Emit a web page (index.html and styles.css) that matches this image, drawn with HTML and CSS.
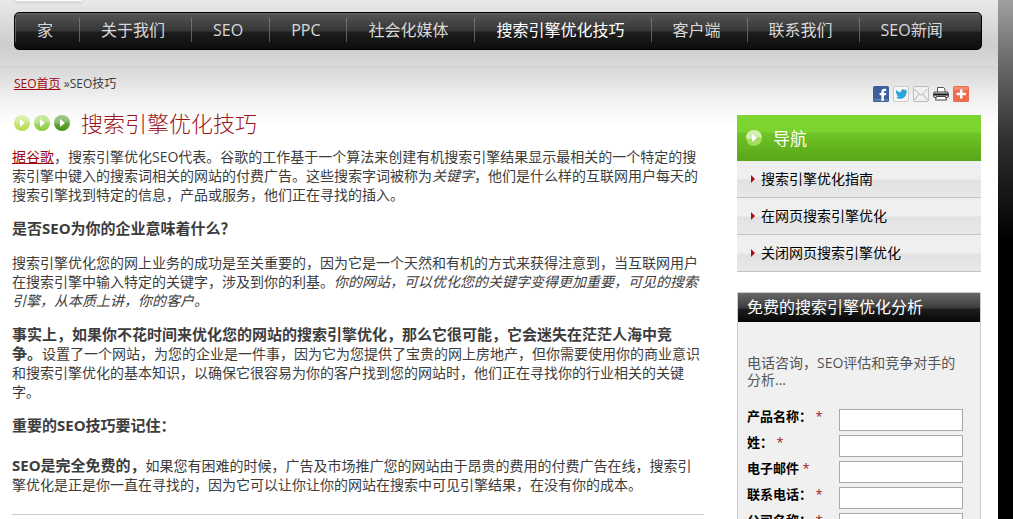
FILE: index.html
```html
<!DOCTYPE html>
<html lang="zh-CN">
<head>
  <meta charset="UTF-8" />
  <title>搜索引擎优化技巧</title>
  <link rel="stylesheet" href="styles.css">
</head>
<body>

  <div class="page">
    <header>
      <div class="logo-tab"></div>
      <nav class="menu">
        <a href="#">家</a>
        <a href="#">关于我们</a>
        <a href="#">SEO</a>
        <a href="#">PPC</a>
        <a href="#">社会化媒体</a>
        <a href="#" class="active">搜索引擎优化技巧</a>
        <a href="#">客户端</a>
        <a href="#">联系我们</a>
        <a href="#">SEO新闻</a>
      </nav>
    </header>

    <div class="columns">
      <main>
        <div class="breadcrumb"><a href="#">SEO首页</a> »SEO技巧</div>

        <div class="title">
          <svg width="58" height="16" viewBox="0 0 58 16">
            <defs>
              <linearGradient id="g1" x2="0" y2="1"><stop offset="0" stop-color="#d6ee9c"/><stop offset="1" stop-color="#b2dc4a"/></linearGradient>
              <linearGradient id="g2" x2="0" y2="1"><stop offset="0" stop-color="#bde58c"/><stop offset="1" stop-color="#84cc38"/></linearGradient>
              <linearGradient id="g3" x2="0" y2="1"><stop offset="0" stop-color="#7fb860"/><stop offset="1" stop-color="#479414"/></linearGradient>
            </defs>
            <circle cx="8" cy="8" r="8" fill="url(#g1)"/>
            <circle cx="28" cy="8" r="8" fill="url(#g2)"/>
            <circle cx="48" cy="8" r="8" fill="url(#g3)"/>
            <g fill="#fff">
              <path opacity=".25" d="M0 8a8 8 0 0 1 16 0Q12 6 8 8T0 8zM20 8a8 8 0 0 1 16 0Q32 6 28 8T20 8zM40 8a8 8 0 0 1 16 0Q52 6 48 8T40 8z"/>
              <path d="M6 4l5 4-5 4zM26 4l5 4-5 4zM46 4l5 4-5 4z"/>
            </g>
          </svg>
          <h1>搜索引擎优化技巧</h1>
        </div>

        <p><a href="#">据谷歌</a>，搜索引擎优化SEO代表。谷歌的工作基于一个算法来创建有机搜索引擎结果显示最相关的一个特定的搜索引擎中键入的搜索词相关的网站的付费广告。这些搜索字词被称为<em>关键字</em>，他们是什么样的互联网用户每天的搜索引擎找到特定的信息，产品或服务，他们正在寻找的插入。</p>

        <p><strong>是否SEO为你的企业意味着什么？</strong></p>

        <p>搜索引擎优化您的网上业务的成功是至关重要的，因为它是一个天然和有机的方式来获得注意到，当互联网用户在搜索引擎中输入特定的关键字，涉及到你的利基。<em>你的网站，可以优化您的关键字变得更加重要，可见的搜索引擎，从本质上讲，你的客户。</em></p>

        <p><strong>事实上，如果你不花时间来优化您的网站的搜索引擎优化，那么它很可能，它会迷失在茫茫人海中竞争。</strong>设置了一个网站，为您的企业是一件事，因为它为您提供了宝贵的网上房地产，但你需要使用你的商业意识和搜索引擎优化的基本知识，以确保它很容易为你的客户找到您的网站时，他们正在寻找你的行业相关的关键字。</p>

        <p><strong>重要的SEO技巧要记住：</strong></p>

        <div class="tip">
          <p><strong>SEO是完全免费的，</strong>如果您有困难的时候，广告及市场推广您的网站由于昂贵的费用的付费广告在线，搜索引擎优化是正是你一直在寻找的，因为它可以让你让你的网站在搜索中可见引擎结果，在没有你的成本。</p>
        </div>
      </main>

      <aside>
        <div class="share">
          <a href="#" aria-label="Facebook">
            <svg width="16" height="16" viewBox="0 0 16 16">
              <rect width="16" height="16" rx="1.5" fill="#3f5f9a"/>
              <path fill="#6a86b8" d="M1 13h14v1.5H1z"/>
              <path fill="#fff" d="M8.4 15V9.3H6.6V7.1h1.8V5.6C8.4 3.7 9.5 2.7 11.2 2.7h2v2.2h-1.3c-.8 0-1 .4-1 1v1.2h2.3l-.3 2.2h-2V15z"/>
            </svg>
          </a>
          <a href="#" aria-label="Twitter">
            <svg width="16" height="16" viewBox="0 0 16 16">
              <rect x=".5" y=".5" width="15" height="15" rx="1.5" fill="#f8f8f8" stroke="#c9c9c9"/>
              <path fill="#2ba3d8" d="M13.8 4.4l-1.2.4c.4-.3.7-.7.9-1.2l-1.4.5a2.4 2.4 0 0 0-4.1 2.1C6 6.1 4.3 5.2 3.1 3.7c-.6 1.100-.3 2.500.8 3.200l-1-.3c0 1.200.8 2.100 1.900 2.300l-1 .1c.3.900 1.100 1.600 2.200 1.600-1 .8-2.200 1.100-3.500 1 4.700 2.800 11.300.9 11.300-7.200z"/>
            </svg>
          </a>
          <a href="#" aria-label="电子邮件">
            <svg width="16" height="16" viewBox="0 0 16 16">
              <rect x=".5" y=".5" width="15" height="15" rx="1.5" fill="#f0f0f0" stroke="#bdbdbd"/>
              <path fill="none" stroke="#b4b4b4" d="M1.5 3L8 9.5 14.5 3M1.5 14L6 8M14.5 14L10 8"/>
            </svg>
          </a>
          <a href="#" aria-label="打印">
            <svg width="16" height="16" viewBox="0 0 16 16">
              <path fill="#fff" stroke="#555" d="M4.5 6.500v-5h6l1.500 1.500v3.500z"/>
              <rect x=".5" y="6" width="15" height="5.500" rx="1.500" fill="#ddd" stroke="#444"/>
              <path stroke="#111" stroke-width="2" d="M1 8.500h14"/>
              <path fill="#fff" stroke="#444" d="M3.500 10.500h9l1 3.500h-11z"/>
            </svg>
          </a>
          <a href="#" aria-label="更多">
            <svg width="16" height="16" viewBox="0 0 16 16">
              <rect width="16" height="16" rx="1.5" fill="#ee6b4e"/>
              <path fill="#f58c70" d="M1 1h14v3H1z"/>
              <path fill="#fff" d="M7 3.500h2.500v3.300H13v2.400H9.500v3.300H7V9.200H3.500V6.800H7z"/>
            </svg>
          </a>
        </div>

        <h2 class="side-head">
          <svg width="16" height="16" viewBox="0 0 16 16">
            <circle cx="8" cy="8" r="8" fill="#a4dc60"/>
            <path fill="#d3efb0" d="M0 8a8 8 0 0 1 16 0Q12 6 8 8T0 8z"/>
            <path fill="#fff" d="M6 4l5 4-5 4z"/>
          </svg>
          导航
        </h2>
        <ul class="side-links">
          <li><a href="#">搜索引擎优化指南</a></li>
          <li><a href="#">在网页搜索引擎优化</a></li>
          <li><a href="#">关闭网页搜索引擎优化</a></li>
        </ul>

        <form class="analysis">
          <h2>免费的搜索引擎优化分析</h2>
          <div class="analysis-body">
            <p>电话咨询，SEO评估和竞争对手的分析...</p>
            <div class="row">
              <label for="product">产品名称： <span>*</span></label>
              <input type="text" id="product">
            </div>
            <div class="row">
              <label for="surname">姓： <span>*</span></label>
              <input type="text" id="surname">
            </div>
            <div class="row">
              <label for="email">电子邮件 <span>*</span></label>
              <input type="text" id="email">
            </div>
            <div class="row">
              <label for="phone">联系电话： <span>*</span></label>
              <input type="text" id="phone">
            </div>
            <div class="row">
              <label for="company">公司名称： <span>*</span></label>
              <input type="text" id="company">
            </div>
          </div>
        </form>
      </aside>
    </div>
  </div>

</body>
</html>
```
FILE: styles.css
```css
* {
  box-sizing: border-box;
}

body {
  margin: 0;
  padding-right: 15px;
  font-family: "Open Sans", "Noto Sans CJK SC", sans-serif;
  font-size: 14px;
  line-height: 19px;
  color: #3c3c3c;
  background: #000 linear-gradient(#a0a0a0, #6c6c6c 60px, #303030 140px, #000 240px) no-repeat;
}

h1, h2, p, ul {
  margin: 0;
  padding: 0;
}

.page {
  min-height: 100vh;
  background: linear-gradient(#e9e9e9, #cdcdcd 45px, #d9d9d9 66px, #cfcfcf 67px, #d8d8d8 68px, #f0f0f0 98px, #fff 125px);
}

/* header */
.logo-tab {
  width: 66px;
  height: 1px;
  margin-left: 16px;
  background: #fff;
  border-radius: 0 0 4px 4px;
  box-shadow: 0 0 4px #777;
}

.menu {
  display: flex;
  height: 38px;
  margin: 11px 16px 0 14px;
  border: 1px solid #000;
  border-radius: 5px;
  background: linear-gradient(#666, #525252 2px, #353535 18px, #1e1e1e 19px, #0c0c0c);
}

.menu a {
  padding: 0 26px 0 21px;
  border-left: 1px solid;
  border-image: linear-gradient(transparent 5px, #777 6px, #555 28px, transparent 29px) 1;
  font-size: 16px;
  line-height: 35px;
  color: #d8d8d8;
  text-decoration: none;
  white-space: nowrap;
}

.menu a.active {
  color: #fff;
}

/* columns */
.columns {
  display: grid;
  grid-template-columns: 1fr 244px;
  gap: 33px;
  padding: 25px 17px 0 12px;
}

main {
  align-self: start;
  padding-bottom: 5px;
  border-bottom: 1px solid #ccc;
}

main a {
  color: #a00610;
}

main p {
  margin-bottom: 15px;
  padding-right: 3px;
}

main strong {
  font-size: 15px;
}

.breadcrumb {
  padding-left: 2px;
  font-size: 12px;
  line-height: 18px;
}

.title {
  display: flex;
  align-items: center;
  gap: 9px;
  margin: 15px 0 9px;
  padding-left: 2px;
}

h1 {
  font-size: 22px;
  font-weight: 300;
  line-height: 30px;
  color: #9c1420;
}

.tip {
  padding-top: 6px;
}

/* sidebar */
.share {
  display: flex;
  justify-content: flex-end;
  gap: 4px;
  padding: 11px 12px 13px 0;
}

.share svg {
  display: block;
}

.side-head {
  display: flex;
  align-items: center;
  gap: 11px;
  height: 46px;
  padding-left: 9px;
  font-size: 17px;
  font-weight: 400;
  color: #fff;
  background: linear-gradient(#7fd632, #7bd32e 17px, #70c426 18px, #58a618);
}

.side-links {
  list-style: none;
}

.side-links li {
  display: flex;
  align-items: center;
  gap: 6px;
  height: 37px;
  padding: 0 0 1px 14px;
  border-bottom: 1px solid #c3c3c3;
  background: linear-gradient(#efefef 18px, #e2e2e2 19px, #e8e8e8);
}

.side-links li::before {
  content: "";
  border: 4px solid transparent;
  border-left-color: #a81018;
  border-right: 0;
}

.side-links a {
  color: #000;
  text-decoration: none;
}

/* analysis form */
.analysis {
  margin-top: 20px;
  border: 1px solid #ccc;
  background: #f0f0f0;
}

.analysis h2 {
  padding-left: 9px;
  font-size: 16px;
  font-weight: 400;
  line-height: 29px;
  color: #fff;
  background: linear-gradient(#686868, #3c3c3c 15px, #1e1e1e 16px, #060606);
}

.analysis-body {
  padding: 32px 17px 8px 9px;
}

.analysis p {
  margin-bottom: 21px;
  line-height: 17px;
  color: #555;
}

.row {
  display: flex;
  justify-content: space-between;
  align-items: flex-start;
  margin-bottom: 4px;
}

.row label {
  font-size: 13px;
  font-weight: 700;
  line-height: 14px;
  color: #000;
}

.row span {
  font-weight: 400;
  color: #a01818;
}

.row input {
  width: 124px;
  height: 22px;
  border: 1px solid #a9a9ad;
  background: #fff;
}
```
